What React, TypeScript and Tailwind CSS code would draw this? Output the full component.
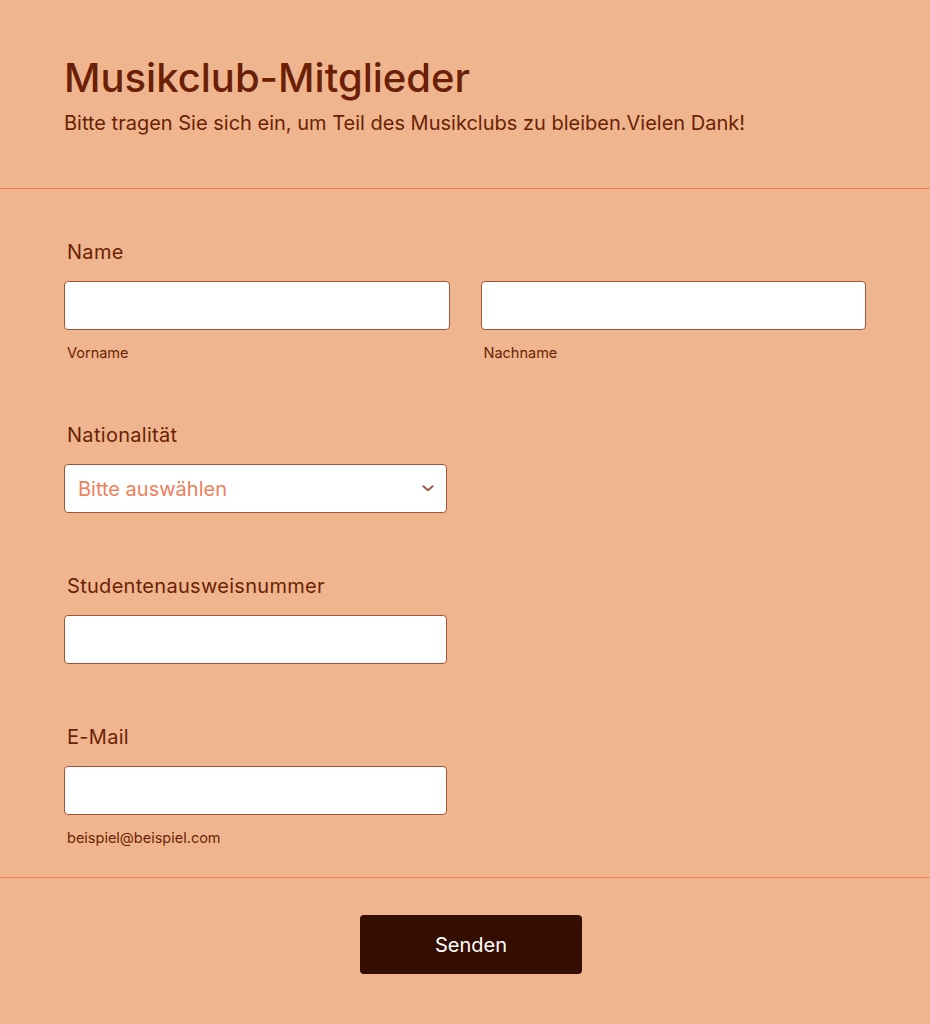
import React from "react";

function Label({ children }: { children: React.ReactNode }) {
	return <label className="block px-[3px] text-[20px] leading-[28px] font-normal tracking-[0.3px] text-[#6b1f06]">{children}</label>;
}

function TextBox() {
	return <input type="text" className="block w-full h-[49px] bg-white rounded-[4px] border border-[#a0553a] px-3 outline-none" />;
}

function Sub({ children }: { children: React.ReactNode }) {
	return <div className="mt-[13px] px-[3px] text-[14.5px] leading-[20px] text-[#6b1f06]">{children}</div>;
}

export default function App() {
	return (
		<div className="min-h-[1024px] w-full bg-[#efb58e]" style={{ fontFamily: "Inter, 'Noto Sans', sans-serif" }}>
			<div className="px-16 pt-[54px] pb-[52px] border-b border-[#f07f5c]">
				<h1 className="text-[40px] leading-[48px] font-medium text-[#6b1f06]">Musikclub-Mitglieder</h1>
				<p className="mt-[8px] text-[20px] leading-[26px] text-[#6b1f06]">
					Bitte tragen Sie sich ein, um Teil des Musikclubs zu bleiben.Vielen Dank!
				</p>
			</div>

			<div className="px-16 pt-[49px] pb-[29px] border-b border-[#f07f5c] flex flex-col">
				<div>
					<Label>Name</Label>
					<div className="mt-[15px] grid grid-cols-2 gap-[31px]">
						<div>
							<TextBox />
							<Sub>Vorname</Sub>
						</div>
						<div>
							<TextBox />
							<Sub>Nachname</Sub>
						</div>
					</div>
				</div>

				<div className="mt-[58px] w-[383px]">
					<Label>Nationalität</Label>
					<div className="mt-[15px] relative">
						<select className="block w-full h-[49px] appearance-none bg-white rounded-[4px] border border-[#a0553a] pl-[13px] pr-10 text-[20px] text-[#f07f5c] outline-none">
							<option>Bitte auswählen</option>
						</select>
						<svg className="absolute right-[12px] top-[17px] pointer-events-none" width="14" height="14" viewBox="0 0 24 24" fill="none" stroke="#9a5a46" strokeWidth="3.4" strokeLinecap="round" strokeLinejoin="round">
							<path d="M4 9l8 7 8-7" />
						</svg>
					</div>
				</div>

				<div className="mt-[59px] w-[383px]">
					<Label>Studentenausweisnummer</Label>
					<div className="mt-[15px]">
						<TextBox />
					</div>
				</div>

				<div className="mt-[59px] w-[383px]">
					<Label>E-Mail</Label>
					<div className="mt-[15px]">
						<TextBox />
					</div>
					<Sub>beispiel@beispiel.com</Sub>
				</div>
			</div>

			<div className="flex justify-center pt-[37px] pb-[50px] pl-[12px]">
				<button type="button" className="w-[222px] h-[59px] rounded-[4px] bg-[#350e02] text-white text-[20px] font-normal">
					Senden
				</button>
			</div>
		</div>
	);
}
